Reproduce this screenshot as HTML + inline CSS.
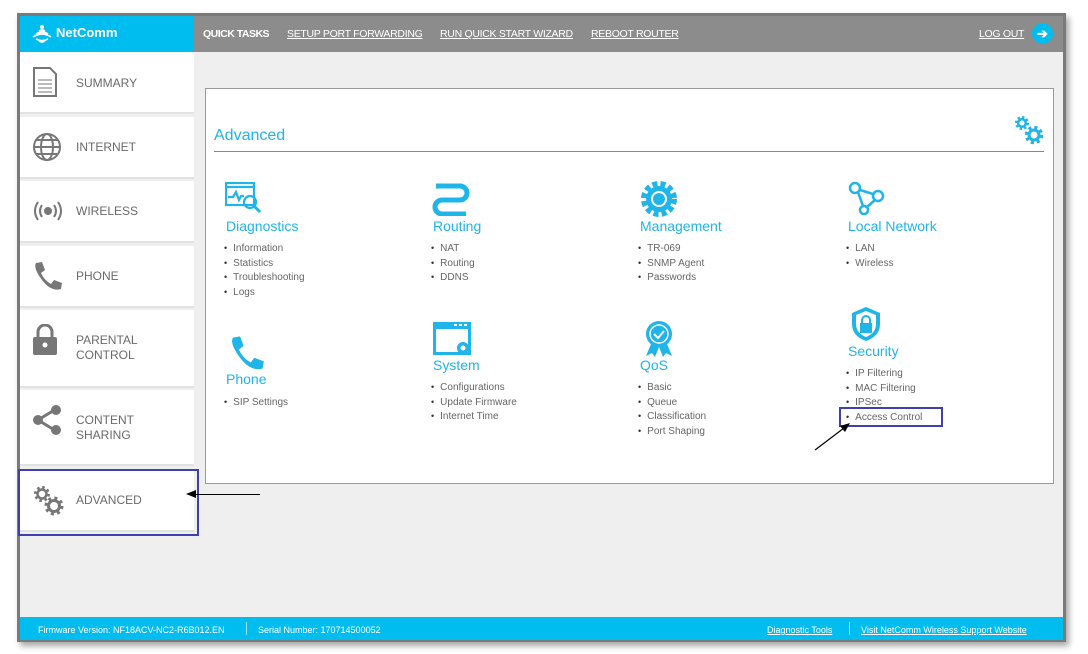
<!DOCTYPE html>
<html><head><style>
*{margin:0;padding:0;box-sizing:border-box}
body{width:1088px;height:654px;background:#fff;font-family:"Liberation Sans",sans-serif;position:relative;overflow:hidden}
.a{position:absolute}
#frame{left:17px;top:13px;width:1049px;height:629px;border:3px solid #7a7a7a;background:#efefef;box-shadow:3px 4px 6px rgba(0,0,0,.35)}
.hdr{left:20px;top:16px;width:1043px;height:36px;background:#8c8c8c}
.logo{left:20px;top:16px;width:174px;height:36px;background:#00bdf0;color:#fff;font-weight:bold;font-size:13px}
.qt{top:28px;font-size:10.5px;color:#fff;text-decoration:underline;letter-spacing:-.3px}
.side{left:20px;width:174px;background:#fff;border-bottom:2px solid #e2e2e2}
.side span{position:absolute;left:56px;font-size:12px;color:#6a6a6a;line-height:15px}
.side svg{position:absolute;left:12px}
.panel{left:205px;top:88px;width:849px;height:396px;background:#fff;border:1px solid #999}
.t{color:#1fb5e8;font-size:14px}
ul{list-style:none;font-size:10px;color:#666}
li{height:14.6px;line-height:14.6px}
li:before{content:"•";margin-right:6px;font-size:9px;color:#333}
.ft{left:20px;top:617px;width:1043px;height:23px;background:#00bdf0;color:#fff;font-size:9px}
</style></head><body>
<div class="a" id="frame"></div>
<div class="a hdr"></div>
<div class="a logo"><svg class="a" style="left:12px;top:9px" width="20" height="18" viewBox="0 0 20 18" fill="none" stroke="#fff" stroke-width="1.6"><circle cx="10" cy="2" r="1.3" fill="#fff"/><path d="M7 6q3-2 6 0M4 9q6-4 12 0M1 12q9-6 18 0M4 14q6 3 12 0M7 16q3 2 6 0"/></svg><span class="a" style="left:36px;top:9px">NetComm</span></div>
<div class="a qt" style="left:203px;text-decoration:none;font-weight:bold;letter-spacing:-.5px">QUICK TASKS</div>
<div class="a qt" style="left:287px">SETUP PORT FORWARDING</div>
<div class="a qt" style="left:440px">RUN QUICK START WIZARD</div>
<div class="a qt" style="left:591px">REBOOT ROUTER</div>
<div class="a qt" style="left:979px">LOG OUT</div>
<div class="a" style="left:1032px;top:23px;width:21px;height:21px;border-radius:50%;background:#00bdf0;color:#fff;font-size:13px;font-weight:bold;text-align:center;line-height:21px">➔</div>

<div class="a side" style="top:52px;height:62px"><svg style="top:14px" width="26" height="32" viewBox="0 0 26 32"><path d="M2 2h16l6 6v22H2z" fill="#fff" stroke="#777" stroke-width="2"/><path d="M6 14h14M6 18h14M6 22h14M6 26h14" stroke="#777"/></svg><span style="top:24px">SUMMARY</span></div>
<div class="a side" style="top:117px;height:62px"><svg style="top:15px" width="30" height="30" viewBox="0 0 30 30" fill="none" stroke="#777" stroke-width="2"><circle cx="15" cy="15" r="13"/><ellipse cx="15" cy="15" rx="6" ry="13"/><path d="M2 15h26M4 8h22M4 22h22"/></svg><span style="top:23px">INTERNET</span></div>
<div class="a side" style="top:181px;height:62px"><svg style="top:20px" width="32" height="20" viewBox="0 0 32 20" fill="none" stroke="#777" stroke-width="2"><circle cx="16" cy="10" r="3" fill="#777"/><path d="M10 4q-4 6 0 12M22 4q4 6 0 12M6 1q-6 9 0 18M26 1q6 9 0 18"/></svg><span style="top:23px">WIRELESS</span></div>
<div class="a side" style="top:246px;height:62px"><svg style="top:14px" width="30" height="32" viewBox="0 0 30 32"><path d="M4 3l6-1 3 8-4 3q3 7 10 11l3-4 8 3-1 6q-10 3-19-9T4 3z" fill="#777"/></svg><span style="top:23px">PHONE</span></div>
<div class="a side" style="top:310px;height:78px"><svg style="top:14px" width="26" height="32" viewBox="0 0 26 32"><path d="M6 13V8a7 7 0 0114 0v5" fill="none" stroke="#777" stroke-width="3"/><rect x="1" y="13" width="24" height="18" rx="2" fill="#777"/><circle cx="13" cy="21" r="2.5" fill="#fff"/></svg><span style="top:23px">PARENTAL<br>CONTROL</span></div>
<div class="a side" style="top:390px;height:76px"><svg style="top:14px" width="30" height="32" viewBox="0 0 30 32"><path d="M24 5L6 16l18 11" stroke="#777" stroke-width="3" fill="none"/><circle cx="24" cy="6" r="5" fill="#777"/><circle cx="6" cy="16" r="5" fill="#777"/><circle cx="24" cy="26" r="5" fill="#777"/></svg><span style="top:23px">CONTENT<br>SHARING</span></div>
<div class="a side" style="top:470px;height:62px"><svg style="top:14px" width="34" height="34" viewBox="0 0 34 34" fill="none" stroke="#777"><circle cx="10" cy="10" r="6.5" stroke-width="3" stroke-dasharray="2.5 2.6"/><circle cx="10" cy="10" r="4.5" stroke-width="2.5"/><circle cx="22" cy="22" r="8" stroke-width="3" stroke-dasharray="3 3.3"/><circle cx="22" cy="22" r="5.5" stroke-width="3"/></svg><span style="top:23px">ADVANCED</span></div>
<div class="a" style="left:18px;top:469px;width:181px;height:67px;border:2px solid #3f3fb0"></div>
<div class="a" style="left:196px;top:494px;width:64px;height:1px;background:#000"></div>
<div class="a" style="left:186px;top:490px;width:0;height:0;border:4px solid transparent;border-right:10px solid #000;border-left:0"></div>

<div class="a panel"></div>
<div class="a t" style="left:214px;top:127px;font-size:16px">Advanced</div>
<div class="a" style="left:214px;top:151px;width:830px;height:1px;background:#888"></div>
<svg class="a" style="left:1013px;top:114px" width="32" height="32" viewBox="0 0 32 32" fill="none" stroke="#1fb5e8"><circle cx="9" cy="9" r="5.5" stroke-width="3" stroke-dasharray="2.2 2.1"/><circle cx="9" cy="9" r="3.8" stroke-width="2.5"/><circle cx="21" cy="21" r="7.5" stroke-width="3.5" stroke-dasharray="3 2.9"/><circle cx="21" cy="21" r="5" stroke-width="3"/></svg>

<!-- icons -->
<svg class="a" style="left:225px;top:182px" width="38" height="32" viewBox="0 0 38 32" fill="none" stroke="#1fb5e8" stroke-width="2.2"><rect x="1" y="1" width="28" height="22"/><path d="M1 5h28M3 15h5l3-5 3 8 2-4h3"/><circle cx="25" cy="20" r="6"/><path d="M29 24l6 6" stroke-width="3"/></svg>
<svg class="a" style="left:432px;top:182px" width="38" height="34" viewBox="0 0 38 34" fill="none" stroke="#1fb5e8" stroke-width="5"><path d="M4 4h24a7 7 0 010 14H10a7 7 0 000 14h24"/></svg>
<svg class="a" style="left:640px;top:180px" width="38" height="38" viewBox="0 0 38 38"><circle cx="19" cy="19" r="15" fill="none" stroke="#1fb5e8" stroke-width="6" stroke-dasharray="5 3"/><circle cx="19" cy="19" r="13" fill="#1fb5e8"/><circle cx="19" cy="19" r="7" fill="none" stroke="#fff" stroke-width="2"/></svg>
<svg class="a" style="left:847px;top:180px" width="40" height="36" viewBox="0 0 40 36" fill="none" stroke="#1fb5e8" stroke-width="2.5"><circle cx="8" cy="8" r="5"/><circle cx="31" cy="16" r="5"/><circle cx="17" cy="30" r="4"/><path d="M13 10l13 4M11 12l5 14M20 27l8-7"/></svg>
<svg class="a" style="left:226px;top:334px" width="40" height="38" viewBox="0 0 30 32"><path d="M4 3l6-1 3 8-4 3q3 7 10 11l3-4 8 3-1 6q-10 3-19-9T4 3z" fill="#1fb5e8"/></svg>
<svg class="a" style="left:433px;top:322px" width="38" height="33" viewBox="0 0 38 33"><rect x="0" y="0" width="38" height="33" fill="#1fb5e8"/><rect x="3" y="7" width="32" height="23" fill="#fff"/><circle cx="30" cy="26" r="6" fill="#1fb5e8"/><circle cx="30" cy="26" r="2.5" fill="#fff"/><rect x="21" y="2" width="3" height="2" fill="#fff"/><rect x="26" y="2" width="3" height="2" fill="#fff"/><rect x="31" y="2" width="3" height="2" fill="#fff"/></svg>
<svg class="a" style="left:643px;top:320px" width="32" height="38" viewBox="0 0 32 38"><path d="M8 24l-5 12 6-3 3 4 4-10M24 24l5 12-6-3-3 4-4-10" fill="#1fb5e8"/><circle cx="16" cy="14" r="13" fill="#1fb5e8"/><circle cx="16" cy="14" r="9" fill="none" stroke="#fff" stroke-width="1.5"/><path d="M11 14l4 4 6-7" stroke="#fff" stroke-width="2" fill="none"/></svg>
<svg class="a" style="left:850px;top:306px" width="32" height="36" viewBox="0 0 32 36"><path d="M16 1l14 6v11q0 12-14 17Q2 30 2 18V7z" fill="#1fb5e8"/><path d="M16 5l10 4v9q0 9-10 13Q6 27 6 18V9z" fill="#fff"/><rect x="10" y="17" width="12" height="10" fill="#1fb5e8"/><path d="M12 17v-3a4 4 0 018 0v3" stroke="#1fb5e8" stroke-width="2" fill="none"/></svg>

<div class="a t" style="left:226px;top:218px">Diagnostics</div>
<ul class="a" style="left:224px;top:241px"><li>Information</li><li>Statistics</li><li>Troubleshooting</li><li>Logs</li></ul>
<div class="a t" style="left:433px;top:218px">Routing</div>
<ul class="a" style="left:431px;top:241px"><li>NAT</li><li>Routing</li><li>DDNS</li></ul>
<div class="a t" style="left:640px;top:218px">Management</div>
<ul class="a" style="left:638px;top:241px"><li>TR-069</li><li>SNMP Agent</li><li>Passwords</li></ul>
<div class="a t" style="left:848px;top:218px">Local Network</div>
<ul class="a" style="left:846px;top:241px"><li>LAN</li><li>Wireless</li></ul>
<div class="a t" style="left:226px;top:371px">Phone</div>
<ul class="a" style="left:224px;top:395px"><li>SIP Settings</li></ul>
<div class="a t" style="left:433px;top:357px">System</div>
<ul class="a" style="left:431px;top:380px"><li>Configurations</li><li>Update Firmware</li><li>Internet Time</li></ul>
<div class="a t" style="left:640px;top:357px">QoS</div>
<ul class="a" style="left:638px;top:380px"><li>Basic</li><li>Queue</li><li>Classification</li><li>Port Shaping</li></ul>
<div class="a t" style="left:848px;top:343px">Security</div>
<ul class="a" style="left:846px;top:366px"><li>IP Filtering</li><li>MAC Filtering</li><li>IPSec</li><li>Access Control</li></ul>
<div class="a" style="left:839px;top:407px;width:104px;height:20px;border:2px solid #3f3fb0"></div>
<svg class="a" style="left:812px;top:420px" width="40" height="32" viewBox="0 0 40 32"><path d="M3 30L32 8" stroke="#000" stroke-width="1.2"/><path d="M38 3l-10 3 5 6z" fill="#000"/></svg>

<div class="a ft"><span class="a" style="left:18px;top:8px">Firmware Version: NF18ACV-NC2-R6B012.EN</span><span class="a" style="left:226px;top:5px;width:1px;height:13px;background:#9de4f8"></span><span class="a" style="left:238px;top:8px">Serial Number: 170714500052</span><span class="a" style="left:747px;top:8px;text-decoration:underline">Diagnostic Tools</span><span class="a" style="left:829px;top:5px;width:1px;height:13px;background:#9de4f8"></span><span class="a" style="left:841px;top:8px;text-decoration:underline">Visit NetComm Wireless Support Website</span></div>
</body></html>
